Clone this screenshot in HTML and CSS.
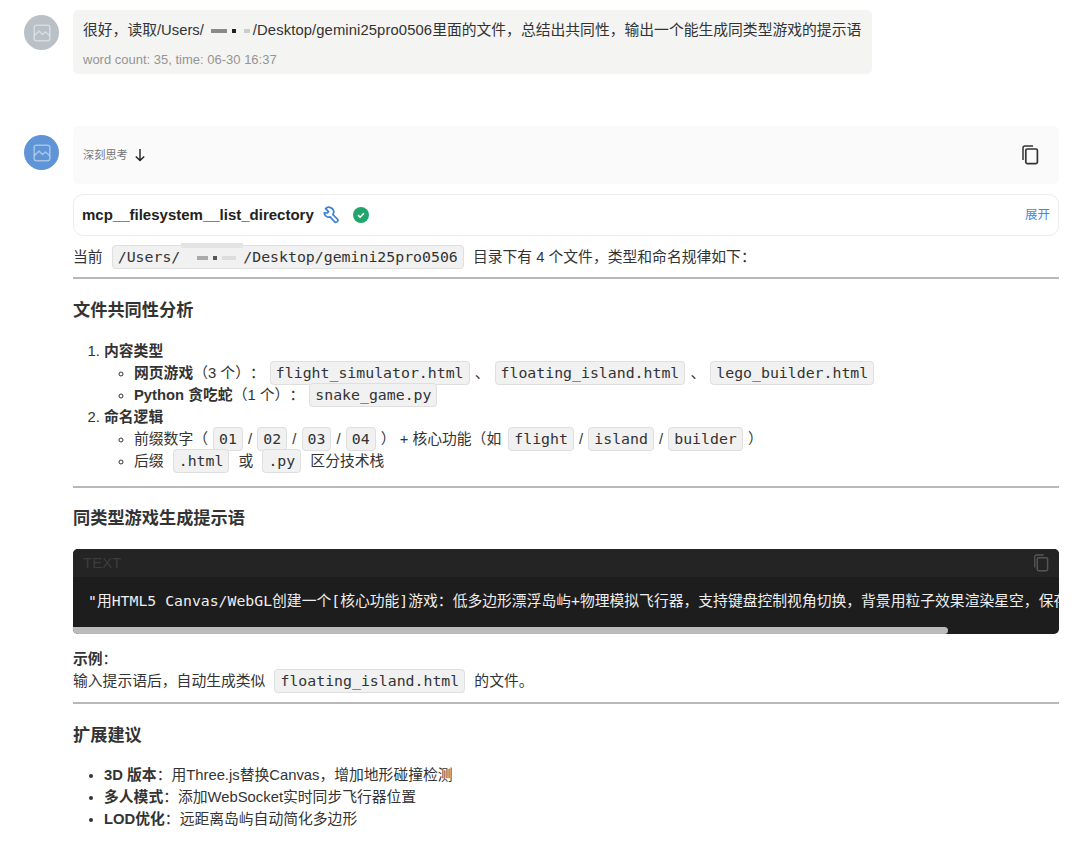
FILE: index.html
```html
<!DOCTYPE html>
<html lang="zh-CN">
<head>
<meta charset="utf-8">
<title>Chat</title>
<link rel="stylesheet" href="styles.css">
</head>
<body>
<svg class="sprites" width="0" height="0" aria-hidden="true">
  <symbol id="pic" viewBox="0 0 18 18"><rect x="1.2" y="1.2" width="15.6" height="15.6" rx="2" fill="none" stroke="currentColor" stroke-width="1.5"/><path d="M1.5 11.5 6 7l3.5 3.5L12.5 8l4 3.5" fill="none" stroke="currentColor" stroke-width="1.5"/></symbol>
  <symbol id="copy" viewBox="0 0 18 20"><path d="M2 15V3a2 2 0 0 1 2-2h8" fill="none" stroke="currentColor" stroke-width="1.5"/><rect x="4.8" y="4" width="11.6" height="14.6" rx="1.5" fill="none" stroke="currentColor" stroke-width="1.7"/></symbol>
</svg>
<main class="page">
  <section class="msg user">
    <div class="avatar grey"><svg class="pic"><use href="#pic"/></svg></div>
    <div class="bubble">
      <p class="ask">很好，读取/Users/<span class="redact r1"><i></i><i></i><i></i></span><span class="lat">/Desktop/gemini25pro0506</span>里面的文件，总结出共同性，输出一个能生成同类型游戏的提示语</p>
      <p class="meta">word count: 35, time: 06-30 16:37</p>
    </div>
  </section>

  <section class="msg bot">
    <div class="avatar blue"><svg class="pic"><use href="#pic"/></svg></div>
    <div class="content">
      <div class="think">
        <span class="think-label">深刻思考</span>
        <svg class="arrow" viewBox="0 0 12 14"><path d="M6 1v11.5M1.8 8.4 6 12.6l4.2-4.2" fill="none" stroke="currentColor" stroke-width="1.4"/></svg>
        <svg class="copy"><use href="#copy"/></svg>
      </div>
      <div class="tool">
        <b class="tool-name">mcp__filesystem__list_directory</b>
        <svg class="wrench" viewBox="0 0 18 18"><path d="M6.600 1.600a4.600 4.600 0 0 0-5 1l3 3-1.400 1.400-3-.1a4.600 4.600 0 0 0 6 4l4.300 4.800a1.900 1.900 0 0 0 2.800-2.700L8.900 8.600a4.600 4.600 0 0 0-2.300-7z" transform="translate(1 0)" fill="none" stroke="currentColor" stroke-width="1.700" stroke-linejoin="round"/></svg>
        <svg class="check" viewBox="0 0 16 16"><circle cx="8" cy="8" r="8" fill="#22a56c"/><path d="M5 8.200 7.100 10.200 11 6.200" fill="none" stroke="#fff" stroke-width="1.600"/></svg>
        <span class="expand">展开</span>
      </div>
      <p class="line first">当前 <code class="path">/Users/<span class="redact r2"><i></i><i></i><i></i></span>/Desktop/gemini25pro0506<span class="smear"></span></code> 目录下有 4 个文件，类型和命名规律如下：</p>
      <hr>
      <h3>文件共同性分析</h3>
      <ol>
        <li><b>内容类型</b>
          <ul>
            <li><b>网页游戏</b>（3 个）： <code class="t">flight_simulator.html</code> 、 <code class="t">floating_island.html</code> 、 <code class="t">lego_builder.html</code></li>
            <li><b>Python 贪吃蛇</b>（1 个）： <code class="t">snake_game.py</code></li>
          </ul>
        </li>
        <li><b>命名逻辑</b>
          <ul>
            <li>前缀数字（ <code class="t">01</code> / <code class="t">02</code> / <code class="t">03</code> / <code class="t">04</code> ） + 核心功能（如 <code class="t g">flight</code> / <code class="t">island</code> / <code class="t">builder</code> ）</li>
            <li>后缀 <code>.html</code> 或 <code>.py</code> 区分技术栈</li>
          </ul>
        </li>
      </ol>
      <hr class="second">
      <h3>同类型游戏生成提示语</h3>
      <div class="codeblock">
        <div class="code-head"><span>TEXT</span><svg class="copy dim"><use href="#copy"/></svg></div>
        <div class="code-body"><pre>"用HTML5 Canvas/WebGL创建一个[核心功能]游戏：低多边形漂浮岛屿+物理模拟飞行器，支持键盘控制视角切换，背景用粒子效果渲染星空，保存</pre></div>
        <div class="track"><div class="thumb"></div></div>
      </div>
      <p class="line example"><b>示例</b>：<br>输入提示语后，自动生成类似 <code>floating_island.html</code> 的文件。</p>
      <hr class="third">
      <h3>扩展建议</h3>
      <ul class="ext">
        <li><b>3D 版本</b>：用Three.js替换Canvas，增加地形碰撞检测</li>
        <li><b>多人模式</b>：添加WebSocket实时同步飞行器位置</li>
        <li><b>LOD优化</b>：远距离岛屿自动简化多边形</li>
      </ul>
    </div>
  </section>
</main>
</body>
</html>
```
FILE: styles.css
```css
* { box-sizing: border-box; }
html, body { margin: 0; padding: 0; background: #fff; }
body {
  width: 1080px;
  height: 844px;
  overflow: hidden;
  font-family: "Liberation Sans", "Noto Sans CJK SC", sans-serif;
  font-size: 14.8px;
  line-height: 22px;
  color: #333;
  text-spacing-trim: space-all;
}
.sprites { position: absolute; }
p { margin: 0; }
.page { padding: 10px 21px 0 24px; }
.msg { display: flex; gap: 14px; align-items: flex-start; }
.msg.bot { margin-top: 52px; }
.avatar {
  flex: none;
  width: 35px;
  height: 35px;
  margin-top: 5px;
  border-radius: 50%;
  display: flex;
  align-items: center;
  justify-content: center;
  color: rgba(255, 255, 255, .45);
}
.bot .avatar { margin-top: 9px; }
.avatar.grey { background: #b9c0c6; }
.avatar.blue { background: #5f94d6; }
.pic { width: 18px; height: 18px; }
.bubble {
  width: 799px;
  height: 64px;
  padding: 9px 10px;
  background: #f4f4f2;
  border-radius: 5px;
}
.ask { white-space: nowrap; }
.lat { letter-spacing: .1px; }
.meta { margin-top: 10px; font-size: 13px; line-height: 18px; color: #949494; }
.redact { display: inline-flex; align-items: center; vertical-align: middle; filter: blur(.6px); }
.redact i { display: block; }
.r1 { width: 49px; gap: 5px; padding-left: 7px; }
.r1 i { height: 4px; background: #555; }
.r1 i:nth-child(1) { width: 16px; background: #8a8a8a; }
.r1 i:nth-child(2) { width: 4px; background: #222; }
.r1 i:nth-child(3) { width: 6px; background: #ccc; margin-left: 3px; }
.r2 { width: 63px; gap: 5px; padding-left: 17px; }
.r2 i { height: 4px; background: #aaa; }
.r2 i:nth-child(1) { width: 11px; }
.r2 i:nth-child(2) { width: 4px; background: #555; }
.r2 i:nth-child(3) { width: 14px; background: #ddd; }
.content { width: 986px; flex: none; }
.think {
  height: 58px;
  display: flex;
  align-items: center;
  padding: 0 20px 0 10px;
  background: #fafafa;
  border-radius: 5px;
}
.think-label { font-size: 11.200px; color: #777; }
.arrow { width: 12px; height: 14px; margin-left: 6px; color: #222; }
.copy { width: 18px; height: 20px; margin-left: auto; color: #333; }
.tool {
  height: 42px;
  margin-top: 10px;
  display: flex;
  align-items: center;
  padding: 0 8px;
  border: 1px solid #ececec;
  border-radius: 10px;
}
.tool-name { font-size: 15px; color: #222; }
.wrench { width: 18px; height: 18px; margin-left: 9px; color: #3c7fd6; }
.check { width: 16px; height: 16px; margin-left: 12px; }
.expand { margin-left: auto; font-size: 12.500px; color: #3f88dc; }
.line.first { margin-top: 10px; position: relative; white-space: nowrap; }
code {
  font-family: "DejaVu Sans Mono", "Noto Sans CJK SC", monospace;
  font-size: 14.850px;
  margin: 0 5px;
  padding: 2px 5px;
  background: #f1f1f1;
  border: 1px solid #dfdfdf;
  border-radius: 4px;
  color: #333;
}
code.t { margin: 0 1px; }
code.g { margin-left: 3px; }
.path { position: relative; }
.smear { position: absolute; left: 68px; top: -3px; width: 62px; height: 5px; background: #e4e4e4; }
hr { height: 2px; margin: 9px 0 0; border: 0; background: #b8b8b8; }
h3 { margin: 20px 0 0; font-size: 17.200px; line-height: 22px; font-weight: bold; color: #333; }
ol, ul { margin: 0; }
ol { margin-top: 19px; padding-left: 31px; }
ol ul { padding-left: 30px; list-style: circle; }
hr.second { margin-top: 14px; }
hr.second + h3 { margin-top: 19px; }
h3 + .codeblock { margin-top: 20px; }
.codeblock {
  background: #1d1d1d;
  border-radius: 5px;
  overflow: hidden;
  color: #eee;
}
.code-head {
  height: 28px;
  display: flex;
  align-items: center;
  padding: 0 10px;
  background: #242424;
  color: #3c3c3c;
  font-size: 15px;
}
.copy.dim { color: #555; width: 16px; height: 18px; }
.code-body { height: 50px; overflow: hidden; }
.track { height: 7px; }
.thumb { width: 875px; height: 7px; background: #bbb; border-radius: 0 4px 4px 0; }
pre {
  margin: 0;
  padding: 13px 15px;
  font-family: "DejaVu Sans Mono", "Noto Sans CJK SC", monospace;
  font-size: 14.800px;
  line-height: 22px;
  white-space: pre;
}
.example { margin-top: 14px; }
hr.third { margin-top: 10px; }
.ext { margin-top: 18px; padding-left: 31px; }
```
